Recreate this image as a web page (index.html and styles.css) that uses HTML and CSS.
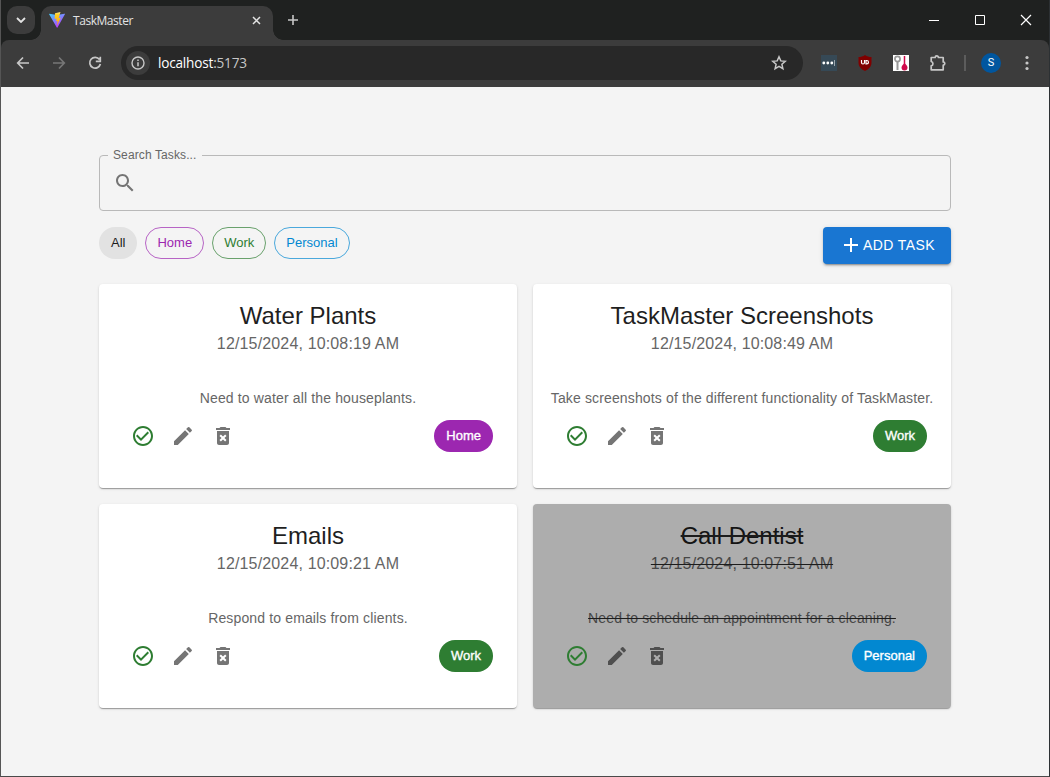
FILE: index.html
```html
<!DOCTYPE html>
<html lang="en">
<head>
<meta charset="utf-8">
<title>TaskMaster</title>
<link rel="stylesheet" href="styles.css">
</head>
<body>
<svg class="defs" aria-hidden="true">
  <symbol id="i-check" viewBox="0 0 24 24"><path d="M16.59 7.58 10 14.17l-3.59-3.58L5 12l5 5 8-8zM12 2C6.48 2 2 6.48 2 12s4.48 10 10 10 10-4.48 10-10S17.52 2 12 2zm0 18c-4.42 0-8-3.58-8-8s3.58-8 8-8 8 3.58 8 8-3.58 8-8 8z"/></symbol>
  <symbol id="i-edit" viewBox="0 0 24 24"><path d="M3 17.25V21h3.75L17.81 9.94l-3.75-3.75L3 17.25zM20.71 7.04c.39-.39.39-1.02 0-1.41l-2.34-2.34a.9959.9959 0 0 0-1.41 0l-1.83 1.83 3.75 3.75 1.83-1.83z"/></symbol>
  <symbol id="i-delete" viewBox="0 0 24 24"><path d="M6 19c0 1.1.9 2 2 2h8c1.1 0 2-.9 2-2V7H6v12zm2.46-7.12 1.41-1.41L12 12.59l2.12-2.12 1.41 1.41L13.41 14l2.12 2.12-1.41 1.41L12 15.41l-2.12 2.12-1.41-1.41L10.59 14l-2.13-2.12zM15.5 4l-1-1h-5l-1 1H5v2h14V4z"/></symbol>
</svg>
<div class="window">
  <header class="tabstrip">
    <div class="tab-search"><svg width="10" height="6" viewBox="0 0 10 6" class="line"><path d="M1 1l4 4 4-4" stroke-width="1.8"/></svg></div>
    <div class="tab">
      <svg class="favicon" width="16" height="16" viewBox="0 0 32 32">
        <defs>
          <linearGradient id="g1" x1="0" y1="0" x2=".6" y2="1"><stop offset="0" stop-color="#41d1ff"/><stop offset="1" stop-color="#bd34fe"/></linearGradient>
          <linearGradient id="g2" x1="0" y1="0" x2="0" y2="1"><stop offset="0" stop-color="#ffea83"/><stop offset=".2" stop-color="#ffcc20"/><stop offset="1" stop-color="#ffa800"/></linearGradient>
        </defs>
        <path fill="url(#g1)" d="M31.8 4.7 17 31.2a.8.8 0 0 1-1.4 0L.2 4.7A.8.8 0 0 1 1 3.500L16 6l14.900-2.600a.8.8 0 0 1 .9 1.300z"/>
        <path fill="url(#g2)" d="M23 .2 12 2.300l-.7 11.700 4-.8-1 5.500 3-.7-1.500 9 7.700-15.500-4.300.8z"/>
      </svg>
      <span class="tab-title">TaskMaster</span>
      <svg class="line tab-close" width="9" height="9" viewBox="0 0 9 9"><path d="M1 1l7 7M8 1L1 8" stroke-width="1.5"/></svg>
    </div>
    <svg class="line new-tab" width="12" height="12" viewBox="0 0 12 12"><path d="M6 1v10M1 6h10" stroke-width="1.6"/></svg>
    <div class="win-controls">
      <svg width="12" height="12" viewBox="0 0 12 12"><path d="M1 6.500h10"/></svg>
      <svg width="12" height="12" viewBox="0 0 12 12"><path d="M1.500 1.500h9v9h-9z"/></svg>
      <svg width="12" height="12" viewBox="0 0 12 12"><path d="M1 1l10 10M11 1L1 11" stroke-width="1.200"/></svg>
    </div>
  </header>
  <nav class="toolbar">
    <div class="nav-icons">
      <svg class="line" width="14" height="14" viewBox="0 0 14 14"><path d="M7 1.500L1.700 7 7 12.500M2 7h11" stroke-width="1.700"/></svg>
      <svg class="line dim" width="14" height="14" viewBox="0 0 14 14"><path d="M7 1.500L12.300 7 7 12.500M12 7H1" stroke-width="1.700"/></svg>
      <svg class="line" width="14" height="14" viewBox="0 0 14 14"><path d="M11.500 3.500A5.400 5.400 0 1 0 12.400 8M12.300.8v4.500H7.800" stroke-width="1.700"/></svg>
    </div>
    <div class="omnibox">
      <div class="site-info"><svg class="line" width="14" height="14" viewBox="0 0 14 14"><circle cx="7" cy="7" r="6" stroke-width="1.400"/><path d="M7 6.300v4M7 3.600v1.500" stroke-width="1.500"/></svg></div>
      <span class="url">localhost<span class="port">:5173</span></span>
      <svg class="line star" width="16" height="16" viewBox="0 0 16 16"><path d="M8 1.800l1.800 4.100 4.500.4-3.400 3 1 4.400L8 11.400l-3.900 2.300 1-4.400-3.400-3 4.500-.4z" stroke-width="1.500"/></svg>
    </div>
    <div class="extensions">
      <svg width="16" height="16" viewBox="0 0 16 16"><path fill="#364956" d="M0 0h16v16H0z"/><g fill="#fff"><circle cx="2.800" cy="8" r="1.400"/><circle cx="6.800" cy="8" r="1.400"/><circle cx="10.800" cy="8" r="1.400"/></g><path d="M13.500 5v6" stroke="#9aa5ac"/></svg>
      <svg width="16" height="16" viewBox="0 0 16 16"><path fill="#800000" d="M8 0c2 1.500 4 2 6.500 2v5.500c0 4-2.500 6.500-6.500 8.500-4-2-6.500-4.500-6.500-8.500V2C4 2 6 1.500 8 0z"/><path d="M4.500 5v2.500a1.500 1.500 0 0 0 3 0V5M9 5.500v3.300h.8a1.600 1.600 0 0 0 0-3.300z" fill="none" stroke="#fff" stroke-width="1.200"/></svg>
      <svg width="16" height="16" viewBox="0 0 16 16"><path fill="#fff" d="M0 0h16v16H0z"/><circle cx="4.500" cy="4" r="2.600" fill="none" stroke="#999" stroke-width="1.700"/><path d="M4.500 6.500V15" stroke="#999" stroke-width="2"/><path d="M11.500 1v10" stroke="#cf0a4b" stroke-width="1.500"/><path fill="#cf0a4b" d="M11.500 8c1 1.500 3 2.500 3 4.500a3 3 0 0 1-6 0c0-2 2-3 3-4.500z"/></svg>
      <svg class="line" width="18" height="18" viewBox="0 0 18 18"><path d="M2.200 3.500h4a1.600 1.600 0 0 1 3.200 0h4.800V8a1.600 1.600 0 0 1 0 3.200v4.600h-12v-4a2.200 2.200 0 0 0 0-4.300z" stroke-width="1.700" stroke-linejoin="round"/></svg>
      <span class="divider"></span>
      <span class="avatar">S</span>
      <svg width="4" height="16" viewBox="0 0 4 16" fill="#c7c7c7"><circle cx="2" cy="2.500" r="1.600"/><circle cx="2" cy="8" r="1.600"/><circle cx="2" cy="13.500" r="1.600"/></svg>
    </div>
  </nav>
  <main class="page">
    <fieldset class="search">
      <legend>Search Tasks...</legend>
      <svg width="24" height="24" viewBox="0 0 24 24"><path d="M15.500 14h-.79l-.28-.27C15.410 12.590 16 11.110 16 9.500 16 5.910 13.090 3 9.500 3S3 5.910 3 9.500 5.910 16 9.500 16c1.610 0 3.090-.59 4.230-1.570l.27.28v.79l5 4.990L20.490 19l-4.990-5zm-6 0C7.010 14 5 11.990 5 9.500S7.010 5 9.500 5 14 7.010 14 9.500 11.990 14 9.500 14z"/></svg>
    </fieldset>
    <div class="actions">
      <div class="filters">
        <span class="chip all">All</span>
        <span class="chip outlined home">Home</span>
        <span class="chip outlined work">Work</span>
        <span class="chip outlined personal">Personal</span>
      </div>
      <button class="add"><svg width="24" height="24" viewBox="0 0 24 24"><path d="M19 13h-6v6h-2v-6H5v-2h6V5h2v6h6z"/></svg>ADD TASK</button>
    </div>
    <section class="cards">
      <article class="card">
        <h2>Water Plants</h2><p class="date">12/15/2024, 10:08:19 AM</p><p class="desc">Need to water all the houseplants.</p>
        <div class="card-row"><svg class="ok"><use href="#i-check"/></svg><svg><use href="#i-edit"/></svg><svg><use href="#i-delete"/></svg><span class="chip filled home">Home</span></div>
      </article>
      <article class="card">
        <h2>TaskMaster Screenshots</h2><p class="date">12/15/2024, 10:08:49 AM</p><p class="desc">Take screenshots of the different functionality of TaskMaster.</p>
        <div class="card-row"><svg class="ok"><use href="#i-check"/></svg><svg><use href="#i-edit"/></svg><svg><use href="#i-delete"/></svg><span class="chip filled work">Work</span></div>
      </article>
      <article class="card">
        <h2>Emails</h2><p class="date">12/15/2024, 10:09:21 AM</p><p class="desc">Respond to emails from clients.</p>
        <div class="card-row"><svg class="ok"><use href="#i-check"/></svg><svg><use href="#i-edit"/></svg><svg><use href="#i-delete"/></svg><span class="chip filled work">Work</span></div>
      </article>
      <article class="card done">
        <h2>Call Dentist</h2><p class="date">12/15/2024, 10:07:51 AM</p><p class="desc">Need to schedule an appointment for a cleaning.</p>
        <div class="card-row"><svg class="ok"><use href="#i-check"/></svg><svg><use href="#i-edit"/></svg><svg><use href="#i-delete"/></svg><span class="chip filled personal">Personal</span></div>
      </article>
    </section>
  </main>
</div>
</body>
</html>
```
FILE: styles.css
```css
* { box-sizing: border-box; }
body { margin: 0; font-family: "Liberation Sans", Arial, sans-serif; }
svg { display: block; flex: none; }
.defs { display: none; }
.line { fill: none; stroke: #c7c7c7; }
.dim { stroke: #777; }

.window {
  width: 1050px; height: 777px; overflow: hidden;
  display: flex; flex-direction: column;
  background: #1f2120;
  border: solid #555; border-width: 0 1px 1px;
  border-right-color: #2c3033; border-bottom-color: #4a4a4a;
}

.tabstrip { height: 40px; flex: none; display: flex; padding: 6px 17px 0 6px; }
.tab-search { width: 28px; height: 28px; border-radius: 10px; background: #3c3c3c; display: grid; place-items: center; }
.tab-search .line, .tab-close { stroke: #e3e3e3; }
.tab {
  position: relative; width: 232px; height: 34px; margin-left: 6px; padding: 0 12px 6px 8px;
  display: flex; align-items: center; gap: 8px;
  background: #3c3c3c; border-radius: 10px 10px 0 0;
}
.tab::before, .tab::after { content: ""; position: absolute; bottom: 0; width: 10px; height: 10px; }
.tab::before { left: -10px; background: radial-gradient(circle at 0 0, transparent 9.5px, #3c3c3c 10px); }
.tab::after { right: -10px; background: radial-gradient(circle at 100% 0, transparent 9.5px, #3c3c3c 10px); }
.tab-title { flex: 1; margin-top: 1px; font: 12px/16px "Open Sans", "Noto Sans", sans-serif; letter-spacing: -.45px; color: #e3e3e3; }
.new-tab { margin: 8px 0 0 14px; }
.win-controls { margin-left: auto; display: flex; gap: 34px; padding-top: 8px; fill: none; stroke: #fff; }

.toolbar {
  height: 47px; flex: none; display: flex; align-items: center; padding: 0 20px 1px 0;
  background: #3c3c3c; border-radius: 8px 8px 0 0;
}
.nav-icons { display: flex; gap: 22px; padding-left: 15px; width: 120px; flex: none; }
.omnibox { width: 682px; flex: none; height: 34px; border-radius: 17px; background: #282828; display: flex; align-items: center; padding: 0 16px 0 5px; }
.site-info { width: 24px; height: 24px; border-radius: 50%; background: #3c3c3c; display: grid; place-items: center; }
.url { flex: 1; margin-left: 8px; font: 13.6px/20px "Open Sans", "Noto Sans", sans-serif; letter-spacing: -.2px; color: #fff; }
.port { color: #c7c7c7; }
.extensions { flex: none; display: flex; align-items: center; padding-left: 18px; gap: 20px; }
.extensions .line { margin-right: -3px; }
.divider { width: 2px; height: 16px; background: #5c5c5c; margin-right: -5px; }
.avatar { width: 20px; height: 20px; border-radius: 50%; background: #00569f; color: #fff; font: 11px/20px Roboto, sans-serif; text-align: center; flex: none; margin-right: 4px; }

.page { flex: 1; background: #f4f4f4; padding: 60px 98px 0; }
.search { height: 64px; margin: 0; padding: 8px 13px 0 8px; border: 1px solid #b9b9b9; border-radius: 4px; color: #666; }
.search legend { padding: 0 6px 0 5px; font-size: 12px; line-height: 16px; letter-spacing: .11px; }
.search svg { margin: 0 0 0 5px; fill: #757575; }

.actions { display: flex; justify-content: space-between; align-items: flex-start; margin-top: 16px; }
.filters { display: flex; gap: 8px; }
.chip { height: 32px; padding: 0 12px; border-radius: 16px; font-size: 13px; line-height: 32px; }
.all { background: #e2e2e2; color: #1d1d1d; }
.outlined { padding: 0 11px; line-height: 30px; border: 1px solid; }
.outlined.home { color: #9c27b0; border-color: rgba(156, 39, 176, .7); }
.outlined.work { color: #2e7d32; border-color: rgba(46, 125, 50, .7); }
.outlined.personal { color: #0288d1; border-color: rgba(2, 136, 209, .7); }
.filled { color: #fff; margin-left: auto; -webkit-text-stroke: .35px #fff; }
.filled.home { background: #9c27b0; }
.filled.work { background: #2e7d32; }
.filled.personal { background: #0288d1; }
.add {
  width: 128px; height: 36.5px; padding: 0 16px; border: 0; border-radius: 4px;
  display: flex; align-items: center; white-space: nowrap;
  background: #1976d2; color: #fff; fill: #fff;
  font: 14px/24.5px "Liberation Sans", Arial, sans-serif; letter-spacing: .4px;
  box-shadow: 0 3px 1px -2px rgba(0,0,0,.2), 0 2px 2px rgba(0,0,0,.14), 0 1px 5px rgba(0,0,0,.12);
}

.cards { display: grid; grid-template-columns: 1fr 1fr; gap: 16px; margin-top: 20px; }
.card {
  height: 204.5px; padding: 16px; margin-bottom: -.5px; background: #fff; border-radius: 4px; text-align: center; color: #1f1f1f;
  box-shadow: 0 2px 1px -1px rgba(0,0,0,.2), 0 1px 1px rgba(0,0,0,.14), 0 1px 3px rgba(0,0,0,.12);
}
.card h2 { margin: 0; font-size: 24px; line-height: 32px; font-weight: 400; }
.card p { margin: 0; color: #666; }
.card .date { font-size: 16px; line-height: 24px; letter-spacing: .15px; }
.card .desc { margin-top: 32px; font-size: 14px; line-height: 20px; letter-spacing: .14px; white-space: nowrap; }
.card-row { display: flex; align-items: center; gap: 16px; height: 40px; margin-top: 8px; padding: 0 8px 0 16px; }
.card-row svg { width: 24px; height: 24px; fill: #757575; }
.card-row .ok { fill: #2e7d32; }
.card.done { background: #adadad; color: #141414; }
.done p { color: #464646; }
.done h2, .done p { text-decoration: line-through #1c1c1c; }
.done .card-row svg { fill: #4f4f4f; }
.done .card-row .ok { fill: #2e7d32; }
```
